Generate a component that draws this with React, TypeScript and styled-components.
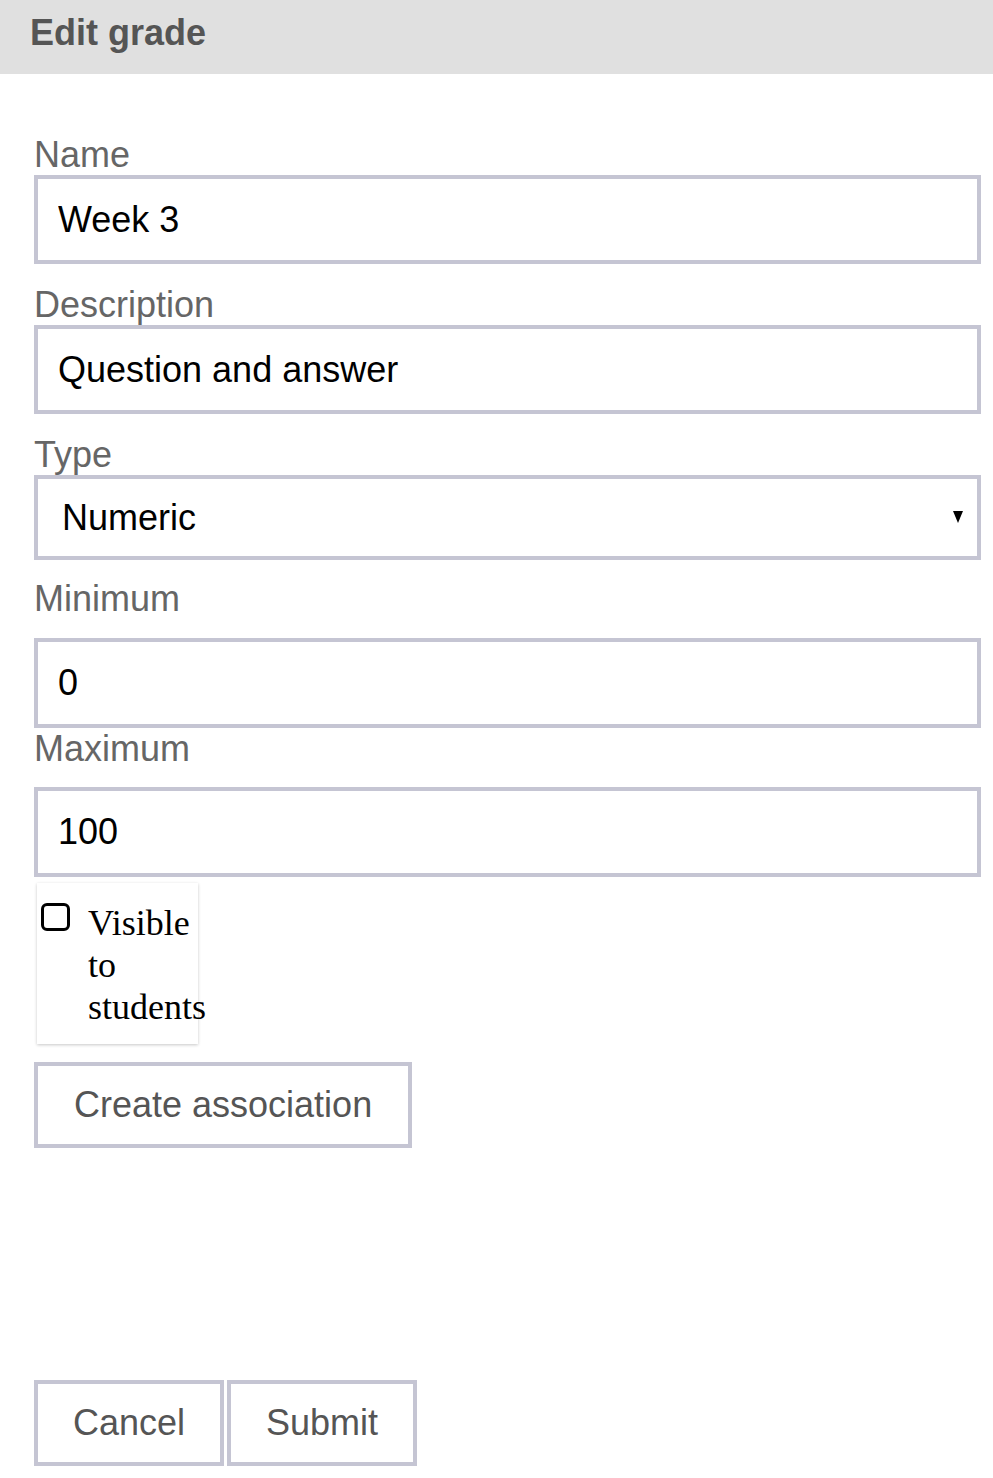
import styled, { createGlobalStyle } from "styled-components"

const GlobalStyle = createGlobalStyle`
    html, body {
        margin: 0;
        padding: 0;
        background: #ffffff;
    }

    * {
        box-sizing: border-box;
    }
`

const Page = styled.div`
    min-height: 100vh;
    display: flex;
    flex-direction: column;
    font-family: "Liberation Sans", Arial, sans-serif;
    font-size: 36px;
`

const Header = styled.header`
    height: 74px;
    padding: 12px 30px 0;
    background-color: #e0e0e0;
    color: #555555;
    font-weight: 700;
    line-height: 41px;
`

const Form = styled.form`
    flex: 1;
    display: flex;
    flex-direction: column;
    padding: 60px 12px 12px 34px;
`

const Label = styled.label<{ $gap?: number }>`
    display: block;
    line-height: 41px;
    color: #666666;
    margin-bottom: ${p => p.$gap ?? 0}px;
`

const Field = styled.div<{ $after?: number }>`
    display: flex;
    flex-direction: column;
    margin-bottom: ${p => p.$after ?? 20}px;
`

const TextInput = styled.input<{ $tall?: boolean }>`
    height: ${p => (p.$tall ? 90 : 89)}px;
    width: 100%;
    padding: 0 20px;
    border: 4px solid #c5c5d3;
    border-radius: 0;
    outline: none;
    background: #ffffff;
    color: #000000;
    font: inherit;
    font-size: 36px;
`

const SelectWrap = styled.div`
    position: relative;
`

const Select = styled.select`
    height: 85px;
    width: 100%;
    padding: 0 24px;
    border: 4px solid #c5c5d3;
    border-radius: 0;
    outline: none;
    appearance: none;
    background: #ffffff;
    color: #000000;
    font: inherit;
    font-size: 36px;
`

const Arrow = styled.span`
    position: absolute;
    right: 18px;
    top: 36px;
    width: 0;
    height: 0;
    border-left: 5px solid transparent;
    border-right: 5px solid transparent;
    border-top: 12px solid #000000;
    pointer-events: none;
`

const CheckCard = styled.div`
    display: flex;
    align-items: flex-start;
    width: 161px;
    height: 161px;
    margin: 6px 0 18px 3px;
    padding: 19px 0 0 4px;
    background: #ffffff;
    box-shadow: 0 1px 3px rgba(0, 0, 0, 0.22);
`

const Checkbox = styled.input`
    appearance: none;
    flex: none;
    width: 29px;
    height: 28px;
    margin: 1px 18px 0 0;
    border: 3px solid #000000;
    border-radius: 6px;
    background: #ffffff;
`

const CheckText = styled.label`
    flex: 1;
    min-width: 0;
    font-family: "Liberation Serif", "Times New Roman", serif;
    font-size: 36px;
    line-height: 42px;
    color: #000000;
`

const Button = styled.button`
    height: 86px;
    padding: 0 36px;
    border: 4px solid #c5c5d3;
    border-radius: 0;
    background: #ffffff;
    color: #555555;
    font: inherit;
    font-size: 36px;
    cursor: pointer;
`

const AssocRow = styled.div`
    display: flex;
`

const Footer = styled.div`
    margin-top: auto;
    display: flex;
    gap: 3px;

    ${Button} {
        width: 190px;
        padding: 0;
    }
`

export default function App() {
    return (
        <Page>
            <GlobalStyle />
            <Header>Edit grade</Header>

            <Form onSubmit={e => e.preventDefault()}>
                <Field>
                    <Label htmlFor="name">Name</Label>
                    <TextInput id="name" type="text" defaultValue="Week 3" />
                </Field>

                <Field>
                    <Label htmlFor="description">Description</Label>
                    <TextInput id="description" type="text" defaultValue="Question and answer" />
                </Field>

                <Field $after={18}>
                    <Label htmlFor="type">Type</Label>
                    <SelectWrap>
                        <Select id="type" defaultValue="numeric">
                            <option value="numeric">Numeric</option>
                            <option value="letter">Letter</option>
                            <option value="pass">Pass / Fail</option>
                        </Select>
                        <Arrow />
                    </SelectWrap>
                </Field>

                <Field $after={0}>
                    <Label htmlFor="minimum" $gap={19}>Minimum</Label>
                    <TextInput id="minimum" type="text" defaultValue="0" $tall />
                </Field>

                <Field $after={0}>
                    <Label htmlFor="maximum" $gap={18}>Maximum</Label>
                    <TextInput id="maximum" type="text" defaultValue="100" $tall />
                </Field>

                <CheckCard>
                    <Checkbox id="visible" type="checkbox" />
                    <CheckText htmlFor="visible">Visible to students</CheckText>
                </CheckCard>

                <AssocRow>
                    <Button type="button">Create association</Button>
                </AssocRow>

                <Footer>
                    <Button type="button">Cancel</Button>
                    <Button type="submit">Submit</Button>
                </Footer>
            </Form>
        </Page>
    )
}
